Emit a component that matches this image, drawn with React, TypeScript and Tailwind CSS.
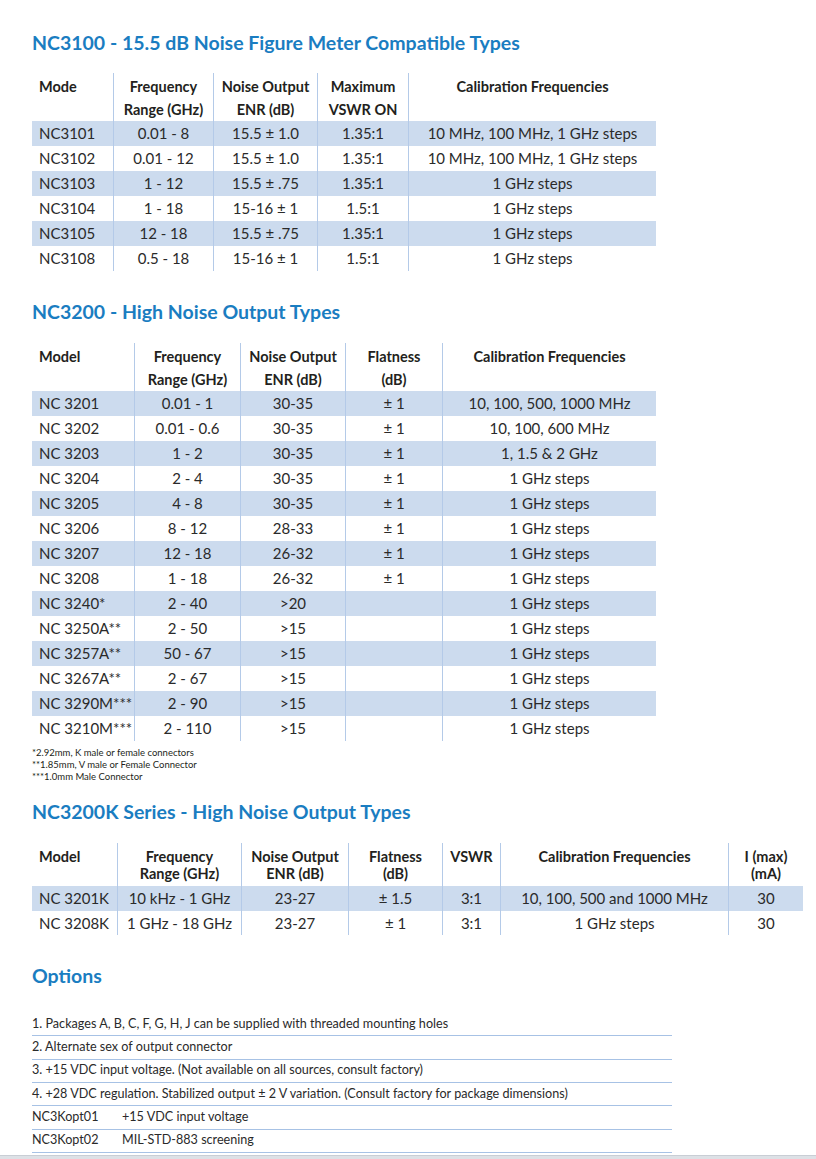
import React from "react";

type Table = {
  cols: string;
  width: string;
  head: React.ReactNode[];
  rows: string[][];
  headClass: string;
  rowClass: string;
};

const t1: Table = {
  cols: "grid-cols-[81px_100px_104px_91px_248px]",
  width: "w-[624px]",
  headClass: "pt-[2px] leading-[23px]",
  rowClass: "h-[25px]",
  head: [
    "Mode",
    <>Frequency<br />Range (GHz)</>,
    <>Noise Output<br />ENR (dB)</>,
    <>Maximum<br />VSWR ON</>,
    "Calibration Frequencies",
  ],
  rows: [
    ["NC3101", "0.01 - 8", "15.5 ± 1.0", "1.35:1", "10 MHz, 100 MHz, 1 GHz steps"],
    ["NC3102", "0.01 - 12", "15.5 ± 1.0", "1.35:1", "10 MHz, 100 MHz, 1 GHz steps"],
    ["NC3103", "1 - 12", "15.5 ± .75", "1.35:1", "1 GHz steps"],
    ["NC3104", "1 - 18", "15-16 ± 1", "1.5:1", "1 GHz steps"],
    ["NC3105", "12 - 18", "15.5 ± .75", "1.35:1", "1 GHz steps"],
    ["NC3108", "0.5 - 18", "15-16 ± 1", "1.5:1", "1 GHz steps"],
  ],
};

const t2: Table = {
  cols: "grid-cols-[102px_106px_105px_97px_214px]",
  width: "w-[624px]",
  headClass: "pt-[2px] leading-[23px]",
  rowClass: "h-[25px]",
  head: [
    "Model",
    <>Frequency<br />Range (GHz)</>,
    <>Noise Output<br />ENR (dB)</>,
    <>Flatness<br />(dB)</>,
    "Calibration Frequencies",
  ],
  rows: [
    ["NC 3201", "0.01 - 1", "30-35", "± 1", "10, 100, 500, 1000 MHz"],
    ["NC 3202", "0.01 - 0.6", "30-35", "± 1", "10, 100, 600 MHz"],
    ["NC 3203", "1 - 2", "30-35", "± 1", "1, 1.5 & 2 GHz"],
    ["NC 3204", "2 - 4", "30-35", "± 1", "1 GHz steps"],
    ["NC 3205", "4 - 8", "30-35", "± 1", "1 GHz steps"],
    ["NC 3206", "8 - 12", "28-33", "± 1", "1 GHz steps"],
    ["NC 3207", "12 - 18", "26-32", "± 1", "1 GHz steps"],
    ["NC 3208", "1 - 18", "26-32", "± 1", "1 GHz steps"],
    ["NC 3240*", "2 - 40", ">20", "", "1 GHz steps"],
    ["NC 3250A**", "2 - 50", ">15", "", "1 GHz steps"],
    ["NC 3257A**", "50 - 67", ">15", "", "1 GHz steps"],
    ["NC 3267A**", "2 - 67", ">15", "", "1 GHz steps"],
    ["NC 3290M***", "2 - 90", ">15", "", "1 GHz steps"],
    ["NC 3210M***", "2 - 110", ">15", "", "1 GHz steps"],
  ],
};

const t3: Table = {
  cols: "grid-cols-[85px_124px_107px_94px_58px_228px_75px]",
  width: "w-[771px]",
  headClass: "pt-[4.5px] pb-[4.5px] leading-[17px]",
  rowClass: "h-[24.5px]",
  head: [
    "Model",
    <>Frequency<br />Range (GHz)</>,
    <>Noise Output<br />ENR (dB)</>,
    <>Flatness<br />(dB)</>,
    "VSWR",
    "Calibration Frequencies",
    <>I (max)<br />(mA)</>,
  ],
  rows: [
    ["NC 3201K", "10 kHz - 1 GHz", "23-27", "± 1.5", "3:1", "10, 100, 500 and 1000 MHz", "30"],
    ["NC 3208K", "1 GHz - 18 GHz", "23-27", "± 1", "3:1", "1 GHz steps", "30"],
  ],
};

const options: [string, string?][] = [
  ["1. Packages A, B, C, F, G, H, J can be supplied with threaded mounting holes"],
  ["2. Alternate sex of output connector"],
  ["3. +15 VDC input voltage. (Not available on all sources, consult factory)"],
  ["4. +28 VDC regulation. Stabilized output ± 2 V variation. (Consult factory for package dimensions)"],
  ["NC3Kopt01", "+15 VDC input voltage"],
  ["NC3Kopt02", "MIL-STD-883 screening"],
];

function Title({ children, className = "" }: { children: React.ReactNode; className?: string }) {
  return (
    <h2 className={`text-[19.5px] leading-[28px] font-bold text-[#1a7dc1] ${className}`}>{children}</h2>
  );
}

function SpecTable({ t, className = "" }: { t: Table; className?: string }) {
  return (
    <div className={`${t.width} ${className}`}>
      <div className={`grid ${t.cols} text-[14.5px] font-bold text-[#231f20]`}>
        {t.head.map((h, i) => (
          <div
            key={i}
            className={`${t.headClass} ${i === 0 ? "pl-[7px] text-left" : "text-center border-l-[1.5px] border-[#b4cae8]"}`}
          >
            {h}
          </div>
        ))}
      </div>
      {t.rows.map((r, ri) => (
        <div
          key={ri}
          className={`grid ${t.cols} text-[15px] text-[#2a2a2a] ${ri % 2 === 0 ? "bg-[#ccdbee]" : ""}`}
        >
          {r.map((c, ci) => (
            <div
              key={ci}
              className={`${t.rowClass} flex items-center whitespace-nowrap ${
                ci === 0 ? "pl-[7px]" : "justify-center border-l-[1.5px] border-[#b4cae8]"
              }`}
            >
              {c}
            </div>
          ))}
        </div>
      ))}
    </div>
  );
}

export default function App() {
  return (
    <div className="w-[816px] h-[1159px] bg-white flex flex-col font-['Lato','Liberation_Sans',sans-serif] overflow-hidden">
      <main className="flex-1 pl-[32px] pt-[29px]">
        <Title>NC3100 - 15.5 dB Noise Figure Meter Compatible Types</Title>
        <SpecTable t={t1} className="mt-[16px]" />

        <Title className="mt-[27px]">NC3200 - High Noise Output Types</Title>
        <SpecTable t={t2} className="mt-[17px]" />

        {/* footnotes */}
        <div className="mt-[6px] text-[9.5px] leading-[12px] text-[#231f20]">
          <p>*2.92mm, K male or female connectors</p>
          <p>**1.85mm, V male or Female Connector</p>
          <p>***1.0mm Male Connector</p>
        </div>

        <Title className="mt-[15px]">NC3200K Series - High Noise Output Types</Title>
        <SpecTable t={t3} className="mt-[17px]" />

        <Title className="mt-[27px]">Options</Title>
        <div className="mt-[23px] w-[640px] text-[12.6px] text-[#2a2a2a]">
          {options.map(([a, b], i) => (
            <div key={i} className="h-[23.33px] flex items-center border-b-[1.5px] border-[#a7c2e5]">
              {b ? (
                <>
                  <span className="w-[90px] shrink-0">{a}</span>
                  <span>{b}</span>
                </>
              ) : (
                a
              )}
            </div>
          ))}
        </div>
      </main>
      <div className="h-[4px] bg-[#dde1e6] border-t border-[#c9ced5]" />
    </div>
  );
}
